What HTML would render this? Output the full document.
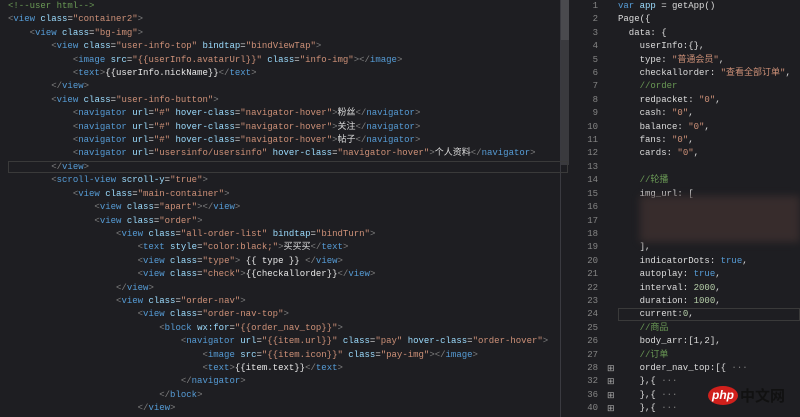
<!DOCTYPE html>
<html><head><meta charset="utf-8"><style>
body{margin:0;width:800px;height:417px;overflow:hidden;background:#1e1e22;font-family:"Liberation Mono","Noto Sans CJK SC",monospace;font-size:9px;color:#dcdcdc}
.pane{position:absolute;top:0;white-space:pre;line-height:13.4px}
#L{left:8px;top:0}
#R{left:618px;top:0}
#N{left:570px;width:28px;text-align:right;color:#858585}
.t{color:#569cd6}.p{color:#808080}.a{color:#9cdcfe}.s{color:#ce9178}.c{color:#6a9955}.n{color:#b5cea8}.w{color:#e8e8e8}
</style></head><body>
<div style="position:absolute;left:560px;top:0;width:1px;height:417px;background:#3a3a40"></div>
<div style="position:absolute;left:561px;top:0;width:8px;height:165px;background:#3a3a3e"></div>
<div style="position:absolute;left:561px;top:0;width:8px;height:40px;background:#4a4a4e"></div>
<div style="position:absolute;left:8px;top:161px;width:560px;height:12px;border:1px solid #3a3a3a;box-sizing:border-box"></div>
<div style="position:absolute;left:618px;top:308px;width:182px;height:13px;border:1px solid #3a3a3a;box-sizing:border-box"></div>
<div class="pane" id="L"><span class="c">&lt;!--user html--&gt;</span>
<span class="p">&lt;</span><span class="t">view</span> <span class="a">class</span>=<span class="s">"container2"</span><span class="p">&gt;</span>
    <span class="p">&lt;</span><span class="t">view</span> <span class="a">class</span>=<span class="s">"bg-img"</span><span class="p">&gt;</span>
        <span class="p">&lt;</span><span class="t">view</span> <span class="a">class</span>=<span class="s">"user-info-top"</span> <span class="a">bindtap</span>=<span class="s">"bindViewTap"</span><span class="p">&gt;</span>
            <span class="p">&lt;</span><span class="t">image</span> <span class="a">src</span>=<span class="s">"{{userInfo.avatarUrl}}"</span> <span class="a">class</span>=<span class="s">"info-img"</span><span class="p">&gt;&lt;/</span><span class="t">image</span><span class="p">&gt;</span>
            <span class="p">&lt;</span><span class="t">text</span><span class="p">&gt;</span><span class="w">{{userInfo.nickName}}</span><span class="p">&lt;/</span><span class="t">text</span><span class="p">&gt;</span>
        <span class="p">&lt;/</span><span class="t">view</span><span class="p">&gt;</span>
        <span class="p">&lt;</span><span class="t">view</span> <span class="a">class</span>=<span class="s">"user-info-button"</span><span class="p">&gt;</span>
            <span class="p">&lt;</span><span class="t">navigator</span> <span class="a">url</span>=<span class="s">"#"</span> <span class="a">hover-class</span>=<span class="s">"navigator-hover"</span><span class="p">&gt;</span>粉丝<span class="p">&lt;/</span><span class="t">navigator</span><span class="p">&gt;</span>
            <span class="p">&lt;</span><span class="t">navigator</span> <span class="a">url</span>=<span class="s">"#"</span> <span class="a">hover-class</span>=<span class="s">"navigator-hover"</span><span class="p">&gt;</span>关注<span class="p">&lt;/</span><span class="t">navigator</span><span class="p">&gt;</span>
            <span class="p">&lt;</span><span class="t">navigator</span> <span class="a">url</span>=<span class="s">"#"</span> <span class="a">hover-class</span>=<span class="s">"navigator-hover"</span><span class="p">&gt;</span>帖子<span class="p">&lt;/</span><span class="t">navigator</span><span class="p">&gt;</span>
            <span class="p">&lt;</span><span class="t">navigator</span> <span class="a">url</span>=<span class="s">"usersinfo/usersinfo"</span> <span class="a">hover-class</span>=<span class="s">"navigator-hover"</span><span class="p">&gt;</span>个人资料<span class="p">&lt;/</span><span class="t">navigator</span><span class="p">&gt;</span>
        <span class="p">&lt;/</span><span class="t">view</span><span class="p">&gt;</span>
        <span class="p">&lt;</span><span class="t">scroll-view</span> <span class="a">scroll-y</span>=<span class="s">"true"</span><span class="p">&gt;</span>
            <span class="p">&lt;</span><span class="t">view</span> <span class="a">class</span>=<span class="s">"main-container"</span><span class="p">&gt;</span>
                <span class="p">&lt;</span><span class="t">view</span> <span class="a">class</span>=<span class="s">"apart"</span><span class="p">&gt;&lt;/</span><span class="t">view</span><span class="p">&gt;</span>
                <span class="p">&lt;</span><span class="t">view</span> <span class="a">class</span>=<span class="s">"order"</span><span class="p">&gt;</span>
                    <span class="p">&lt;</span><span class="t">view</span> <span class="a">class</span>=<span class="s">"all-order-list"</span> <span class="a">bindtap</span>=<span class="s">"bindTurn"</span><span class="p">&gt;</span>
                        <span class="p">&lt;</span><span class="t">text</span> <span class="a">style</span>=<span class="s">"color:black;"</span><span class="p">&gt;</span>买买买<span class="p">&lt;/</span><span class="t">text</span><span class="p">&gt;</span>
                        <span class="p">&lt;</span><span class="t">view</span> <span class="a">class</span>=<span class="s">"type"</span><span class="p">&gt;</span> <span class="w">{{ type }}</span> <span class="p">&lt;/</span><span class="t">view</span><span class="p">&gt;</span>
                        <span class="p">&lt;</span><span class="t">view</span> <span class="a">class</span>=<span class="s">"check"</span><span class="p">&gt;</span><span class="w">{{checkallorder}}</span><span class="p">&lt;/</span><span class="t">view</span><span class="p">&gt;</span>
                    <span class="p">&lt;/</span><span class="t">view</span><span class="p">&gt;</span>
                    <span class="p">&lt;</span><span class="t">view</span> <span class="a">class</span>=<span class="s">"order-nav"</span><span class="p">&gt;</span>
                        <span class="p">&lt;</span><span class="t">view</span> <span class="a">class</span>=<span class="s">"order-nav-top"</span><span class="p">&gt;</span>
                            <span class="p">&lt;</span><span class="t">block</span> <span class="a">wx:for</span>=<span class="s">"{{order_nav_top}}"</span><span class="p">&gt;</span>
                                <span class="p">&lt;</span><span class="t">navigator</span> <span class="a">url</span>=<span class="s">"{{item.url}}"</span> <span class="a">class</span>=<span class="s">"pay"</span> <span class="a">hover-class</span>=<span class="s">"order-hover"</span><span class="p">&gt;</span>
                                    <span class="p">&lt;</span><span class="t">image</span> <span class="a">src</span>=<span class="s">"{{item.icon}}"</span> <span class="a">class</span>=<span class="s">"pay-img"</span><span class="p">&gt;&lt;/</span><span class="t">image</span><span class="p">&gt;</span>
                                    <span class="p">&lt;</span><span class="t">text</span><span class="p">&gt;</span><span class="w">{{item.text}}</span><span class="p">&lt;/</span><span class="t">text</span><span class="p">&gt;</span>
                                <span class="p">&lt;/</span><span class="t">navigator</span><span class="p">&gt;</span>
                            <span class="p">&lt;/</span><span class="t">block</span><span class="p">&gt;</span>
                        <span class="p">&lt;/</span><span class="t">view</span><span class="p">&gt;</span></div>
<div class="pane" id="N">1
2
3
4
5
6
7
8
9
10
11
12
13
14
15
16
17
18
19
20
21
22
23
24
25
26
27
28
32
36
40</div>
<div style="position:absolute;left:607px;top:362px;color:#aaa;font:9px 'Liberation Sans',sans-serif;line-height:13.4px;white-space:pre">⊞
⊞
⊞
⊞</div>
<div class="pane" id="R"><span class="t">var</span> <span class="a">app</span> = getApp()
Page({
  data: {
    userInfo:{},
    type: <span class="s">"普通会员"</span>,
    checkallorder: <span class="s">"查看全部订单"</span>,
    <span class="c">//order</span>
    redpacket: <span class="s">"0"</span>,
    cash: <span class="s">"0"</span>,
    balance: <span class="s">"0"</span>,
    fans: <span class="s">"0"</span>,
    cards: <span class="s">"0"</span>,

    <span class="c">//轮播</span>
    img_url: [



    ],
    indicatorDots: <span class="t">true</span>,
    autoplay: <span class="t">true</span>,
    interval: <span class="n">2000</span>,
    duration: <span class="n">1000</span>,
    current:<span class="n">0</span>,
    <span class="c">//商品</span>
    body_arr:[1,2],
    <span class="c">//订单</span>
    order_nav_top:[{ <span class="p">···</span>
    },{ <span class="p">···</span>
    },{ <span class="p">···</span>
    },{ <span class="p">···</span></div>
<div style="position:absolute;left:640px;top:196px;width:160px;height:46px;background:#3a2e2e;filter:blur(4px);opacity:.9"></div>
<div style="position:absolute;left:708px;top:386px;width:30px;height:19px;border-radius:50%;background:#d0201c;color:#fff;font:italic bold 12px 'Liberation Sans',sans-serif;text-align:center;line-height:18px">php</div>
<div style="position:absolute;left:740px;top:386px;color:#111;font:bold 15px 'Noto Sans CJK SC',sans-serif;line-height:19px">中文网</div>
</body></html>
